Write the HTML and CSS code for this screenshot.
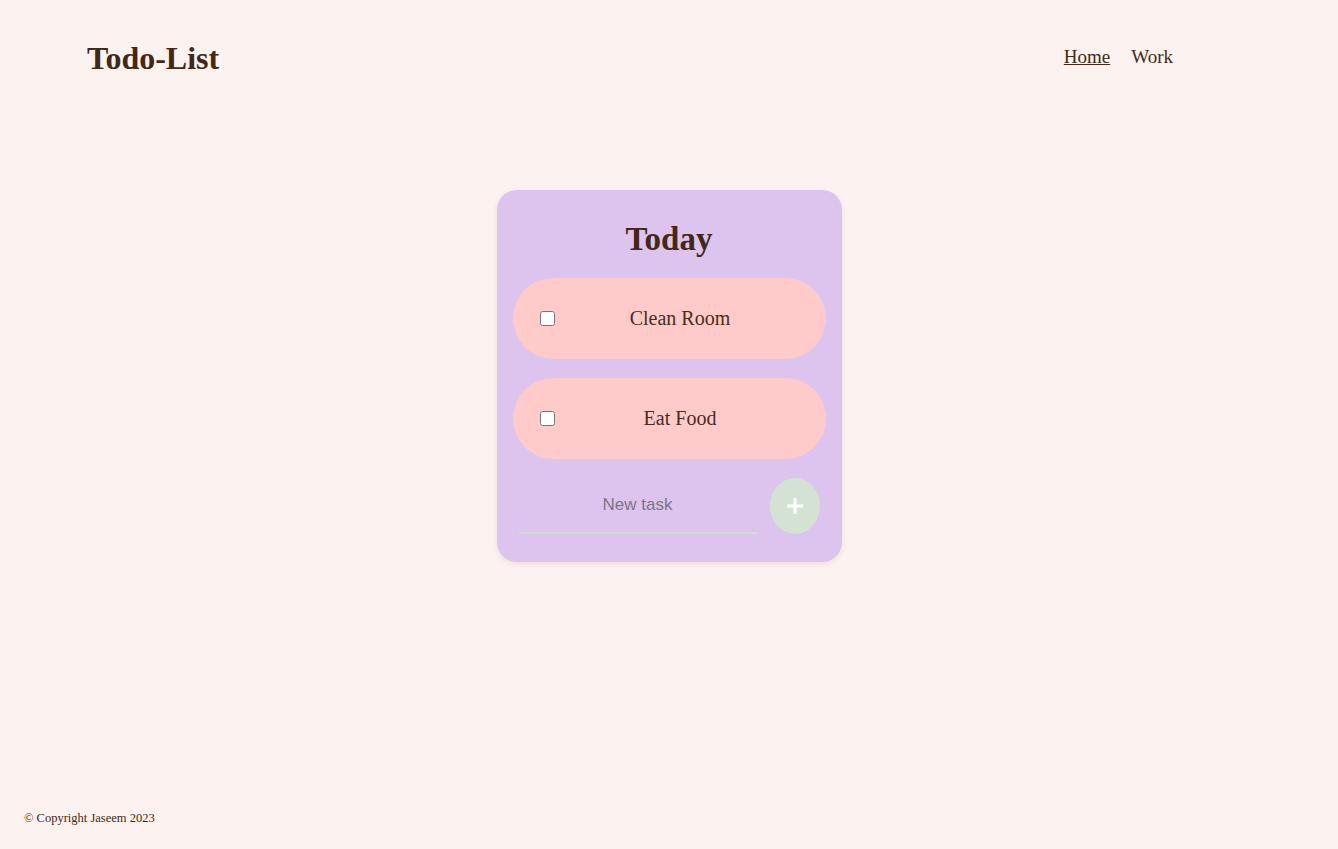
FILE: index.html
```html
<!DOCTYPE html>
<html lang="en">
<head>
<meta charset="utf-8">
<title>Todo-List</title>
<link rel="stylesheet" href="styles.css">
</head>
<body>
  <header class="site-header">
    <h1 class="logo">Todo-List</h1>
    <nav class="nav">
      <a class="nav-link nav-link-active" href="#">Home</a>
      <a class="nav-link" href="#">Work</a>
    </nav>
  </header>
  <main class="main">
    <section class="card">
      <h2 class="card-title">Today</h2>
      <div class="item">
        <input class="item-check" type="checkbox">
        <p class="item-text">Clean Room</p>
      </div>
      <div class="item">
        <input class="item-check" type="checkbox">
        <p class="item-text">Eat Food</p>
      </div>
      <form class="new-row">
        <input class="new-input" type="text" placeholder="New task" autocomplete="off">
        <button class="add-btn" type="button" aria-label="Add">
          <svg width="18" height="18" viewBox="0 0 18 18"><path d="M9 1v16M1 9h16" stroke="#fff" stroke-width="3" fill="none"/></svg>
        </button>
      </form>
    </section>
  </main>
  <footer class="footer">
    <p class="copyright">© Copyright Jaseem 2023</p>
  </footer>
</body>
</html>
```
FILE: styles.css
```css
* { box-sizing: border-box; }
html, body { margin: 0; padding: 0; }
body {
  background: #fcf2ef;
  color: #432818;
  font-family: "Liberation Serif", "Times New Roman", serif;
  min-height: 100vh;
  display: flex;
  flex-direction: column;
}
.site-header {
  height: 114px;
  display: flex;
  align-items: center;
  justify-content: space-between;
  padding: 0 165px 0 87px;
}
.logo {
  margin: 0;
  font-size: 32px;
  line-height: 40px;
  font-weight: bold;
  padding-top: 1px;
}
.nav {
  display: flex;
  gap: 21px;
}
.nav-link {
  color: #432818;
  text-decoration: none;
  font-size: 19px;
  line-height: 24px;
}
.nav-link-active { text-decoration: underline; }
.main {
  flex: 1;
  display: flex;
  justify-content: center;
  align-items: flex-start;
  padding-top: 76px;
}
.card {
  width: 345px;
  background: #dcc4ef;
  border-radius: 20px;
  padding: 16px 16px 28px;
  box-shadow: 0 2px 6px rgba(0, 0, 0, 0.08);
}
.card-title {
  margin: 13px 0 19px;
  text-align: center;
  font-size: 33px;
  line-height: 40px;
  font-weight: bold;
}
.item {
  height: 81px;
  border-radius: 41px;
  background: #ffcaca;
  display: flex;
  align-items: center;
  padding: 0 20px 0 27px;
  margin-bottom: 19px;
}
.item-check {
  width: 15px;
  height: 17px;
  margin: 0;
}
.item-text {
  flex: 1;
  margin: 0;
  text-align: center;
  font-size: 20px;
  color: #4a2c1c;
}
.new-row {
  display: flex;
  align-items: center;
  gap: 13px;
  padding: 0 6px;
  margin: 18px 0 0;
}
.new-input {
  flex: 1;
  min-width: 0;
  height: 56px;
  border: none;
  border-bottom: 2px solid #d3dccf;
  background: transparent;
  text-align: center;
  font-family: "Liberation Sans", Arial, sans-serif;
  font-size: 17px;
  color: #432818;
  outline: none;
  padding: 0;
}
.new-input::placeholder { color: #7d7583; }
.add-btn {
  width: 50px;
  height: 56px;
  border: none;
  border-radius: 50%;
  background: #d4e2d4;
  display: flex;
  align-items: center;
  justify-content: center;
  padding: 0;
}
.add-btn svg { display: block; }
.footer {
  padding: 0 24px 23px;
}
.copyright {
  margin: 0;
  font-size: 12.5px;
  line-height: 15px;
}
```
